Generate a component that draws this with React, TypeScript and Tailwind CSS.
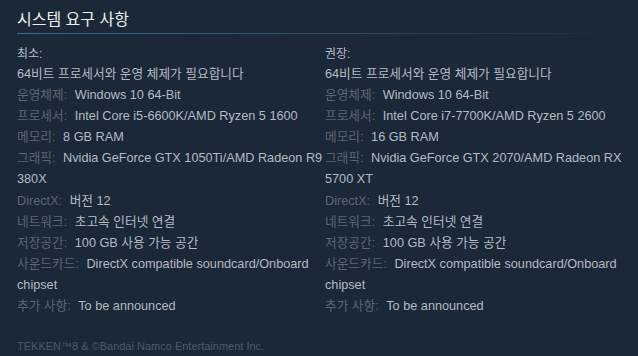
const minReq = [
  ['운영체제', 'Windows 10 64-Bit'],
  ['프로세서', 'Intel Core i5-6600K/AMD Ryzen 5 1600'],
  ['메모리', '8 GB RAM'],
  ['그래픽', 'Nvidia GeForce GTX 1050Ti/AMD Radeon R9 380X'],
  ['DirectX', '버전 12'],
  ['네트워크', '초고속 인터넷 연결'],
  ['저장공간', '100 GB 사용 가능 공간'],
  ['사운드카드', 'DirectX compatible soundcard/Onboard chipset'],
  ['추가 사항', 'To be announced'],
];

const recReq = [
  ['운영체제', 'Windows 10 64-Bit'],
  ['프로세서', 'Intel Core i7-7700K/AMD Ryzen 5 2600'],
  ['메모리', '16 GB RAM'],
  ['그래픽', 'Nvidia GeForce GTX 2070/AMD Radeon RX 5700 XT'],
  ['DirectX', '버전 12'],
  ['네트워크', '초고속 인터넷 연결'],
  ['저장공간', '100 GB 사용 가능 공간'],
  ['사운드카드', 'DirectX compatible soundcard/Onboard chipset'],
  ['추가 사항', 'To be announced'],
];

function ReqColumn({ title, rows }: { title: string; rows: string[][] }) {
  return (
    <div className="text-[12.7px] leading-[21.1px] text-[#b4bbc2]">
      <div className="text-[12px] pt-[3px] leading-[19px] text-[#b4bbc2]">{title}</div>
      <div>64비트 프로세서와 운영 체제가 필요합니다</div>
      <ul>
        {rows.map(([label, value]) => (
          <li key={label}>
            <span className="text-[#5d666f] mr-[4px]">{label}:</span> {value}
          </li>
        ))}
      </ul>
    </div>
  );
}

export default function App() {
  return (
    <div
      className="w-[638px] h-[356px] overflow-hidden bg-[#1b2838] px-[17px]"
      style={{ fontFamily: '"Liberation Sans", "Noto Sans CJK KR", Arial, sans-serif' }}
    >
      {/* Heading */}
      <h2 className="pt-[8px] text-[16px] leading-[24px] text-[#eef0f2]">시스템 요구 사항</h2>
      <div className="h-px mt-[1px] w-full bg-gradient-to-r from-[#3d6c8c] via-[#2f5068] to-transparent" />

      {/* Requirements */}
      <div className="grid grid-cols-[308px_300px] mt-[8px]">
        <ReqColumn title="최소:" rows={minReq} />
        <ReqColumn title="권장:" rows={recReq} />
      </div>

      <div className="mt-[21px] text-[11px] leading-[16px] text-[#4b5b68]">
        TEKKEN™8 &amp; ©Bandai Namco Entertainment Inc.
      </div>
    </div>
  );
}
